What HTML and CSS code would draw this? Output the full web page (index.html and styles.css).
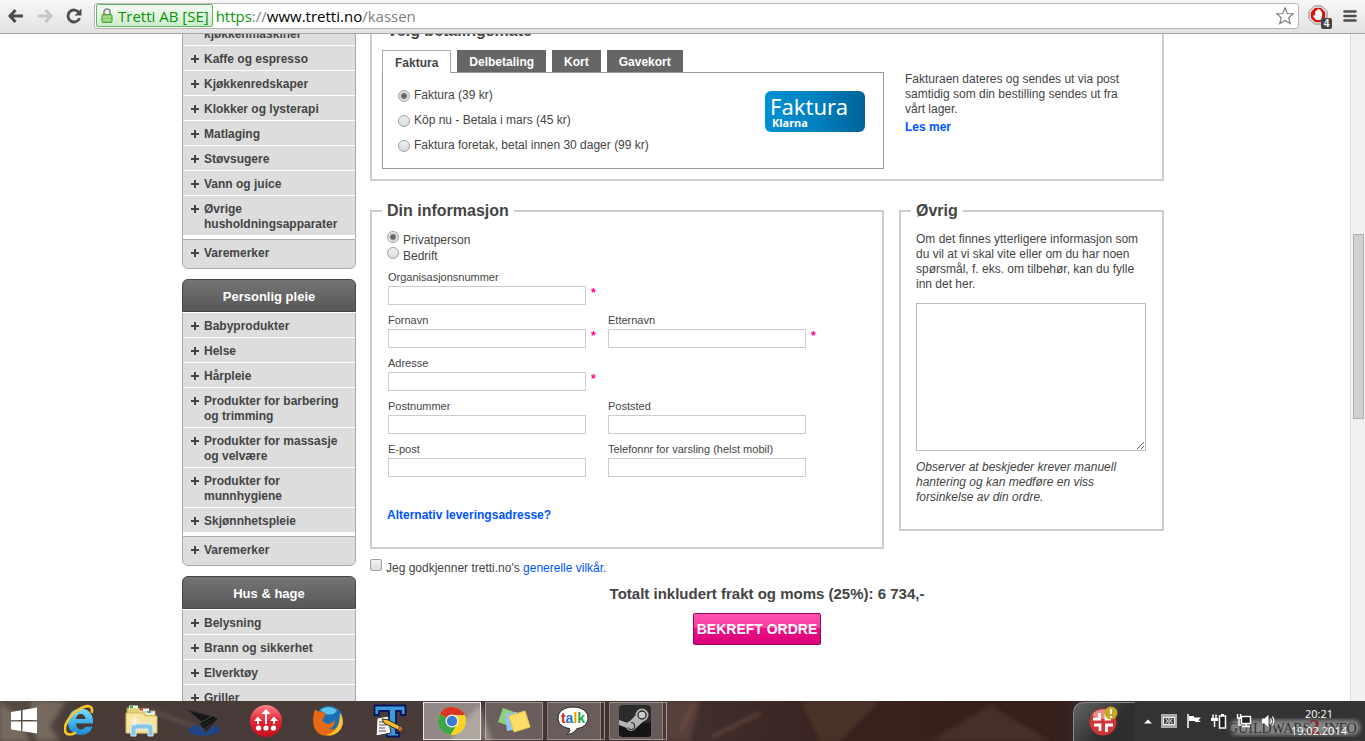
FILE: index.html
```html
<!DOCTYPE html>
<html lang="no">
<head>
    <meta charset="UTF-8">
    <meta name="viewport" content="width=device-width, initial-scale=1.0">
    <title>Tretti.no - Kassen</title>
    <link rel="stylesheet" href="styles.css">
</head>
<body>

    <!-- Browser toolbar -->
    <header class="toolbar">
        <button class="tool-btn" aria-label="Back">
            <svg width="18" height="16" viewBox="0 0 18 16"><path d="M8.500 2 L3 8 L8.500 14 M3 8 H16" fill="none" stroke="#4d4d4d" stroke-width="3"/></svg>
        </button>
        <button class="tool-btn" aria-label="Forward">
            <svg width="18" height="16" viewBox="0 0 18 16"><path d="M9.500 2 L15 8 L9.500 14 M15 8 H2" fill="none" stroke="#c6c6c6" stroke-width="3"/></svg>
        </button>
        <button class="tool-btn" aria-label="Reload">
            <svg width="18" height="16" viewBox="0 0 18 16"><path d="M14 4.6 A6 6 0 1 0 14.6 10.3" fill="none" stroke="#4d4d4d" stroke-width="2.8"/><path d="M16.500 0.500 V7.500 H9.500 Z" fill="#4d4d4d"/></svg>
        </button>
        <div class="omnibox">
            <button class="cert">
                <svg width="12" height="15" viewBox="0 0 12 15"><path d="M3 7 V4 a3 3 0 0 1 6 0 V7" fill="none" stroke="#8a8a8a" stroke-width="1.7"/><rect x="1" y="6.500" width="10" height="8" rx="1" fill="#86d06c" stroke="#4c9a3c"/><path d="M2 9 H10 M2 12 H10" stroke="#b4e8a0"/></svg>
                Tretti AB [SE]
            </button>
            <div class="url" role="textbox" contenteditable="true" spellcheck="false" aria-label="Address"><span class="url-scheme">https</span><span class="url-dim">://</span>www.tretti.no<span class="url-dim">/kassen</span></div>
            <button class="tool-btn" aria-label="Bookmark">
                <svg width="18" height="18" viewBox="0 0 18 18"><path d="M9 1 L11.300 6.500 L17.200 6.900 L12.700 10.700 L14.200 16.500 L9 13.400 L3.800 16.500 L5.300 10.700 L0.800 6.900 L6.700 6.500 Z" fill="#fff" stroke="#7d7d7d" stroke-width="1.200"/></svg>
            </button>
        </div>
        <button class="tool-btn tool-ext" aria-label="AdBlock">
            <svg width="24" height="24" viewBox="0 0 24 24">
                <path d="M6.500 1 H13.500 L19 6.500 V13.500 L13.500 19 H6.500 L1 13.500 V6.500 Z" fill="#fff" stroke="#777"/>
                <path d="M7 2.800 H13 L17.200 7 V13 L13 17.200 H7 L2.800 13 V7 Z" fill="#d8100c"/>
                <path d="M8 15 L5 11 l1.200 -1 L7.200 10.800 V6 h1.300 V4.800 h1.400 V4 h1.400 V4.800 h1.400 V6.500 h1.400 V12 L12.500 15 Z" fill="#fff"/>
                <rect x="13" y="13" width="11" height="11" rx="2" fill="#444"/>
                <text x="18.500" y="22" text-anchor="middle" class="badge-text">4</text>
            </svg>
        </button>
        <button class="tool-btn" aria-label="Menu">
            <svg width="14" height="14" viewBox="0 0 14 14"><path d="M1.500 2.500 H12.500 M1.500 7 H12.500 M1.500 11.500 H12.500" stroke="#4d4d4d" stroke-width="2.600" stroke-linecap="round"/></svg>
        </button>
    </header>

    <div class="viewport">
        <div class="page-area">
            <div class="page">

                <!-- Category menu -->
                <nav class="sidebar">
                    <section class="menu">
                        <ul>
                            <li class="no-mark"><a href="#">kjøkkenmaskiner</a></li>
                            <li><a href="#">Kaffe og espresso</a></li>
                            <li><a href="#">Kjøkkenredskaper</a></li>
                            <li><a href="#">Klokker og lysterapi</a></li>
                            <li><a href="#">Matlaging</a></li>
                            <li><a href="#">Støvsugere</a></li>
                            <li><a href="#">Vann og juice</a></li>
                            <li><a href="#">Øvrige husholdningsapparater</a></li>
                        </ul>
                        <div class="brands"><a href="#">Varemerker</a></div>
                    </section>
                    <section class="menu">
                        <h2>Personlig pleie</h2>
                        <ul>
                            <li><a href="#">Babyprodukter</a></li>
                            <li><a href="#">Helse</a></li>
                            <li><a href="#">Hårpleie</a></li>
                            <li><a href="#">Produkter for barbering og trimming</a></li>
                            <li><a href="#">Produkter for massasje og velvære</a></li>
                            <li><a href="#">Produkter for munnhygiene</a></li>
                            <li><a href="#">Skjønnhetspleie</a></li>
                        </ul>
                        <div class="brands"><a href="#">Varemerker</a></div>
                    </section>
                    <section class="menu">
                        <h2>Hus &amp; hage</h2>
                        <ul>
                            <li><a href="#">Belysning</a></li>
                            <li><a href="#">Brann og sikkerhet</a></li>
                            <li><a href="#">Elverktøy</a></li>
                            <li><a href="#">Griller</a></li>
                        </ul>
                    </section>
                </nav>

                <!-- Checkout form -->
                <form class="checkout">
                    <fieldset class="box payment">
                        <legend>Velg betalingsmåte</legend>
                        <div class="payment-cols">
                            <div class="payment-main">
                                <div class="tabs">
                                    <button type="button" class="tab active">Faktura</button>
                                    <button type="button" class="tab">Delbetaling</button>
                                    <button type="button" class="tab">Kort</button>
                                    <button type="button" class="tab">Gavekort</button>
                                </div>
                                <div class="tab-body">
                                    <div class="options">
                                        <label><input type="radio" name="pay" checked> Faktura (39 kr)</label>
                                        <label><input type="radio" name="pay"> Köp nu - Betala i mars (45 kr)</label>
                                        <label><input type="radio" name="pay"> Faktura foretak, betal innen 30 dager (99 kr)</label>
                                    </div>
                                    <svg class="klarna" width="100" height="41" viewBox="0 0 100 41">
                                        <defs><linearGradient id="klarnaBg"><stop offset="0" stop-color="#0090d4"/><stop offset="0.500" stop-color="#0082c0"/><stop offset="1" stop-color="#00639a"/></linearGradient></defs>
                                        <rect width="100" height="41" rx="6" fill="url(#klarnaBg)"/>
                                        <text x="5" y="24" class="klarna-big">Faktura</text>
                                        <text x="7" y="36" class="klarna-small">Klarna</text>
                                    </svg>
                                </div>
                            </div>
                            <div class="payment-info">
                                <p>Fakturaen dateres og sendes ut via post samtidig som din bestilling sendes ut fra vårt lager.</p>
                                <a class="strong-link" href="#">Les mer</a>
                            </div>
                        </div>
                    </fieldset>

                    <div class="columns">
                        <fieldset class="box info">
                            <legend>Din informasjon</legend>
                            <div class="person-type">
                                <label><input type="radio" name="type" checked> Privatperson</label>
                                <label><input type="radio" name="type"> Bedrift</label>
                            </div>
                            <div class="fields">
                                <div class="field full required">
                                    <label for="orgnr">Organisasjonsnummer</label>
                                    <input type="text" id="orgnr">
                                </div>
                                <div class="field required">
                                    <label for="fornavn">Fornavn</label>
                                    <input type="text" id="fornavn">
                                </div>
                                <div class="field required">
                                    <label for="etternavn">Etternavn</label>
                                    <input type="text" id="etternavn">
                                </div>
                                <div class="field full required">
                                    <label for="adresse">Adresse</label>
                                    <input type="text" id="adresse">
                                </div>
                                <div class="field">
                                    <label for="postnr">Postnummer</label>
                                    <input type="text" id="postnr">
                                </div>
                                <div class="field">
                                    <label for="poststed">Poststed</label>
                                    <input type="text" id="poststed">
                                </div>
                                <div class="field">
                                    <label for="epost">E-post</label>
                                    <input type="text" id="epost">
                                </div>
                                <div class="field">
                                    <label for="telefon">Telefonnr for varsling (helst mobil)</label>
                                    <input type="text" id="telefon">
                                </div>
                            </div>
                            <a class="strong-link alt-address" href="#">Alternativ leveringsadresse?</a>
                        </fieldset>

                        <fieldset class="box other">
                            <legend>Øvrig</legend>
                            <label for="comment">Om det finnes ytterligere informasjon som du vil at vi skal vite eller om du har noen spørsmål, f. eks. om tilbehør, kan du fylle inn det her.</label>
                            <textarea id="comment"></textarea>
                            <p class="note">Observer at beskjeder krever manuell hantering og kan medføre en viss forsinkelse av din ordre.</p>
                        </fieldset>
                    </div>

                    <div class="terms">
                        <input type="checkbox" id="terms">
                        <label for="terms">Jeg godkjenner tretti.no's <a href="#">generelle vilkår</a>.</label>
                    </div>
                    <div class="total">Totalt inkludert frakt og moms (25%): 6 734,-</div>
                    <div class="confirm-row">
                        <button type="button" class="confirm">BEKREFT ORDRE</button>
                    </div>
                </form>
            </div>
        </div>
        <div class="scrollbar"><div class="thumb"></div></div>
    </div>

    <!-- Windows taskbar -->
    <footer class="taskbar">
        <svg class="wallpaper" viewBox="0 0 1365 40" preserveAspectRatio="none" aria-hidden="true">
            <defs>
                <linearGradient id="wall">
                    <stop offset="0" stop-color="#5a4c45"/><stop offset="0.060" stop-color="#483a37"/>
                    <stop offset="0.300" stop-color="#493b39"/><stop offset="0.500" stop-color="#40302d"/>
                    <stop offset="0.620" stop-color="#38221e"/><stop offset="0.780" stop-color="#35201b"/>
                    <stop offset="0.800" stop-color="#333"/><stop offset="1" stop-color="#343434"/>
                </linearGradient>
                <filter id="soft"><feGaussianBlur stdDeviation="2"/></filter>
            </defs>
            <rect width="1365" height="40" fill="url(#wall)"/>
            <g filter="url(#soft)">
                <path d="M0 2 L14 12 L30 40 H0 Z" fill="#766a5e"/>
                <path d="M30 0 H66 L50 26 L60 40 H36 Z" fill="#85796b" opacity=".7"/>
                <path d="M140 5 L205 30" stroke="#85756d" stroke-width="2" opacity=".6"/>
                <path d="M480 4 L492 40 H450 L462 22 Z" fill="#9a9082" opacity=".6"/>
                <path d="M664 0 H700 L690 40 H666 Z" fill="#57413a"/>
                <path d="M694 3 L680 30 M712 36 L760 12" stroke="#765044" stroke-width="2"/>
                <path d="M800 0 H880 L840 40 H820 Z" fill="#4b3028"/>
                <path d="M930 40 L990 4 L1050 40 Z" fill="#472e26"/>
            </g>
        </svg>
        <button class="start" aria-label="Start">
            <svg width="28" height="28" viewBox="0 0 28 28" fill="#fff"><path d="M1 5 L11 3.300 V13 H1 Z M12.500 3 L27 .5 V13 H12.500 Z M1 14.500 H11 V24 L1 22.400 Z M12.500 14.500 H27 V26.500 L12.500 24.300 Z"/></svg>
        </button>
        <button class="task" aria-label="Internet Explorer">
            <svg width="32" height="34" viewBox="0 0 32 34">
                <defs><linearGradient id="ieBlue" x2="0" y2="1"><stop offset="0" stop-color="#7fdcff"/><stop offset="0.500" stop-color="#43b4ee"/><stop offset="1" stop-color="#1c86d2"/></linearGradient></defs>
                <path fill-rule="evenodd" d="M16.500 4.500 C24 4.500 29 10 29 17 V19.500 H12 C12 23 14 25.500 17 25.500 C19 25.500 20.500 24.500 21.500 22.800 H28.500 C27 28 22.500 31 16.500 31 C9 31 4 25.500 4 18 C4 10 9.500 4.500 16.500 4.500 Z M12 15 H21.500 C21.300 12 19.500 10 16.700 10 C14 10 12.200 12 12 15 Z" fill="url(#ieBlue)"/>
                <path d="M27.500 9 C30 1 23 0 14 6 C5 12 -1 22 1.500 28 C3 31.500 8 31 12 28.500" fill="none" stroke="#f8c625" stroke-width="2.600"/>
            </svg>
        </button>
        <button class="task" aria-label="File Explorer">
            <svg width="34" height="32" viewBox="0 0 34 32">
                <path d="M2 6 V3 h12 l2 3 h14 V28 H2 Z" fill="#e4cf77" stroke="#b69a3d"/>
                <path d="M4 2 h9 M15 5 h9 M21 8 h9" stroke="#f7f7f0" stroke-width="3"/>
                <path d="M5 2 h3" stroke="#2bab38" stroke-width="2"/><path d="M15 4.500 h3" stroke="#d93222" stroke-width="2"/><path d="M22 7 h4" stroke="#3197d6" stroke-width="2"/>
                <path d="M1 8 H18 l2 3 H32 V28 H1 Z" fill="#f6e5a0" stroke="#d0b968"/>
                <path d="M6 31 V23 q0 -4 4 -4 H24 q4 0 4 4 V31 h-5 V24 H11 V31 Z" fill="#87c5e4" stroke="#d3eefa"/>
                <path d="M10 11 V21 M5 16 H15 M7 13 L13 19 M13 13 L7 19" stroke="#fff" opacity=".8"/>
            </svg>
        </button>
        <button class="task" aria-label="Laptop">
            <svg width="34" height="32" viewBox="0 0 34 32">
                <ellipse cx="17" cy="25" rx="15.500" ry="5.500" fill="#1c4687"/>
                <path d="M1 5 L24 11 L31 13 L18 20 Z" fill="#171717" stroke="#333"/>
                <path d="M11 19 L27 10 L32 14 L19 28 Z" fill="#2a2a2a" stroke="#4b4b4b"/>
                <path d="M14 19 L27 12 M16 22 L29 14" stroke="#111" stroke-width="2"/>
            </svg>
        </button>
        <button class="task" aria-label="Launcher">
            <svg width="34" height="34" viewBox="0 0 34 34">
                <defs><linearGradient id="redBall" x2="0" y2="1"><stop offset="0" stop-color="#ff7f86"/><stop offset="0.500" stop-color="#e02733"/><stop offset="1" stop-color="#c8101d"/></linearGradient></defs>
                <circle cx="17" cy="17" r="16" fill="url(#redBall)"/>
                <path d="M9 20 V15 M17 20 V8 M25 20 V15" stroke="#fff" stroke-width="2"/>
                <path d="M5 17 L9 12.500 L13 17 Z M12.500 10 L17 5 L21.500 10 Z M21 17 L25 12.500 L29 17 Z" fill="#fff"/>
                <circle cx="9.500" cy="24" r="2.600" fill="#fff"/><circle cx="17" cy="24" r="2.600" fill="#fff"/><circle cx="24.500" cy="24" r="2.600" fill="#fff"/>
            </svg>
        </button>
        <button class="task" aria-label="Firefox">
            <svg width="32" height="32" viewBox="0 0 32 32">
                <circle cx="17" cy="15" r="14" fill="#1c6fb5"/><path d="M8 5 Q16 -1 25 5 Q22 11 14 9 Z" fill="#5cc3ea"/>
                <path d="M3 4 C5 7 8 6 10 7 C13 8 15 10 12 12 C10 14 10 16 13 18 C17 20 21 18 22 15 C24 19 21 23 17 24 C25 26 29 19 28 9 C32 14 32 22 26 27 C19 33 7 32 3 24 C0 18 1 10 3 4 Z" fill="#e66a14"/>
                <path d="M28 8 C32 14 32 22 26 27 C22 30 18 31 14 30 C24 28 28 20 28 8 Z" fill="#fbc530"/>
            </svg>
        </button>
        <button class="task" aria-label="Text editor">
            <svg width="34" height="34" viewBox="0 0 34 34">
                <path d="M1.500 1.500 H32.500 V11 H28 V7 H23 V29 H26 V32.500 H14 V29 H16 V7 H6 V11 H1.500 Z" fill="#3d9ad8" stroke="#0a145c" stroke-width="1.800"/>
                <path d="M4 14 L15 12 L18 29 L3 32 Z" fill="#f4f4f4" stroke="#333"/>
                <path d="M6 18 H13 M6 21 H14 M6 24 H12 M6 27 H13" stroke="#555"/>
                <path d="M9 15 L14 15.500 L27 22 L25 26 L11 19 Z" fill="#f6bb35" stroke="#3d2a0a"/><path d="M25 26 L27 22 L29 24 L28 27 Z" fill="#e06a3c"/>
            </svg>
        </button>
        <button class="task open current" aria-label="Chrome">
            <svg width="30" height="30" viewBox="0 0 30 30">
                <circle cx="15" cy="15" r="14" fill="#fbd227"/>
                <path d="M15 15 L2.900 8 A14 14 0 0 1 27.800 9 L15 9 Z" fill="#dc3527"/>
                <path d="M15 15 L2.900 8 A14 14 0 0 0 13.500 29 L20 18 Z" fill="#3da648"/>
                <circle cx="15" cy="15" r="6.500" fill="#f2f2f2"/><circle cx="15" cy="15" r="5.200" fill="#3b7ed0"/>
            </svg>
        </button>
        <button class="task open" aria-label="Sticky Notes">
            <svg width="34" height="28" viewBox="0 0 34 28">
                <path d="M6 1 L20 6 L15 20 L1 15 Z" fill="#8fd07c"/><path d="M8 7 L20 5 L23 22 L10 24 Z" fill="#90c5ee"/><path d="M12 9 L28 4 L33 20 L17 25 Z" fill="#fbdc67" stroke="#f0ca48"/>
            </svg>
        </button>
        <button class="task open stacked" aria-label="Google Talk">
            <svg width="32" height="30" viewBox="0 0 32 30">
                <path d="M16 1 C25 1 31 5.500 31 12 C31 18 26 22 20 22.500 C18 26 15 28 10 28.500 C12 27 13 25 12.500 22.500 C5 21.500 1 17.500 1 12 C1 5.500 7 1 16 1 Z" fill="#fff" stroke="#222"/>
                <text x="16" y="16.500" text-anchor="middle" class="talk-text"><tspan fill="#d22">t</tspan><tspan fill="#27c">a</tspan><tspan fill="#e90">l</tspan><tspan fill="#2a3">k</tspan></text>
            </svg>
        </button>
        <button class="task open stacked" aria-label="Steam">
            <svg width="32" height="32" viewBox="0 0 32 32">
                <rect width="32" height="32" rx="4" fill="#2b2b2b"/><path d="M0 18 H32 V28 q0 4 -4 4 H4 q-4 0 -4 -4 Z" fill="#151515"/>
                <path d="M0 15 L9 18 L17 10 L27 14 L17 23 Q12 28 8 23 L0 20 Z" fill="#b5b5b5"/>
                <circle cx="23" cy="10" r="6.500" fill="#b5b5b5"/><circle cx="23" cy="10" r="4" fill="#ccc" stroke="#333" stroke-width="1.400"/>
                <circle cx="12" cy="21" r="5" fill="#b5b5b5"/><path d="M9 22.500 A3.500 3.500 0 1 0 12 17.500" fill="none" stroke="#333" stroke-width="1.200"/>
            </svg>
        </button>

        <div class="tray">
            <button class="tray-tile" aria-label="Avira">
                <svg width="30" height="32" viewBox="0 0 30 32">
                    <circle cx="14" cy="17" r="13.500" fill="#cf3537"/><path d="M3 10 A13.500 13.500 0 0 1 25 10 Q14 18 3 10" fill="#ee8b88"/>
                    <path d="M4 14 H10.500 V8 M17 9 V14 H22 M24 20 H17.500 V27 M11 26 V20 H5" fill="none" stroke="#fff" stroke-width="2.800"/>
                    <circle cx="22" cy="8" r="6.500" fill="#c8a727"/><path d="M22 4 V9 M22 11 V13" stroke="#fff" stroke-width="2"/>
                </svg>
            </button>
            <svg class="icon" width="8" height="5" viewBox="0 0 8 5"><path d="M0 4.500 L4 .5 L8 4.500 Z" fill="#fff"/></svg>
            <svg class="icon" width="16" height="14" viewBox="0 0 16 14"><rect width="16" height="14" fill="#a9adb2"/><rect x="2.500" y="3.500" width="11" height="7" fill="#444" stroke="#eee"/><path d="M8 4 V10 M5 4.500 L6.500 7 L5 9.500 M11 4.500 L9.500 7 L11 9.500" fill="none" stroke="#eee"/></svg>
            <svg class="icon" width="16" height="16" viewBox="0 0 16 16"><path d="M2 1 V15" stroke="#fff" stroke-width="1.500"/><path d="M3 3 H8 V4.500 H15 L12.500 7 L15 9 H9 V8 H3 Z" fill="#fff"/></svg>
            <svg class="icon" width="16" height="16" viewBox="0 0 16 16"><path d="M3.500 8 V14 M2 1.500 V5 M5 1.500 V5" stroke="#fff" stroke-width="1.500"/><path d="M0 5 H7 V8 H0 Z" fill="#fff"/><rect x="8.500" y="3" width="6" height="12" fill="#222" stroke="#fff" stroke-width="1.500"/><rect x="10" y="1" width="3" height="2" fill="#fff"/></svg>
            <svg class="icon" width="16" height="16" viewBox="0 0 16 16"><rect x="5.500" y="3.500" width="9" height="7" fill="#222" stroke="#fff" stroke-width="1.400"/><path d="M10 10 V13.500 M6 13.500 H14 M1.500 1 V5 H4.500 V1 M3 5 V12 H5" fill="none" stroke="#fff" stroke-width="1.400"/></svg>
            <svg class="icon" width="16" height="16" viewBox="0 0 16 16"><path d="M1 5.500 H3.500 L7.500 2 V14 L3.500 10.500 H1 Z" fill="#fff"/><path d="M9.500 5.500 Q11 8 9.500 10.500 M11.500 3.500 Q14 8 11.500 12.500" fill="none" stroke="#fff" stroke-width="1.200"/></svg>
            <div class="clock"><time>20:21</time><time>19.02.2014</time></div>
            <svg class="watermark" width="138" height="26" viewBox="0 0 138 26">
                <defs><filter id="glow"><feGaussianBlur stdDeviation="2"/></filter></defs>
                <rect x="4" y="6" width="130" height="15" rx="7" fill="#aaa" opacity=".7" filter="url(#glow)"/>
                <text x="2" y="19" class="watermark-text">GUILDWARS</text><text x="83" y="20" class="watermark-two">2</text><text x="98" y="19" class="watermark-text">INFO</text>
            </svg>
        </div>
    </footer>

</body>
</html>
```
FILE: styles.css
```css
* {
    box-sizing: border-box;
}

body {
    margin: 0;
    height: 100vh;
    display: flex;
    flex-direction: column;
    overflow: hidden;
    background-color: #fff;
    color: #444;
    font-family: "Liberation Sans", Arial, sans-serif;
    font-size: 12px;
    line-height: 15px;
}

button,
input,
textarea {
    font-family: inherit;
}

p {
    margin: 0;
}

a {
    color: #05f;
    text-decoration: none;
}

/* Browser toolbar */
.toolbar {
    display: flex;
    align-items: center;
    gap: 11px;
    height: 34px;
    padding: 0 8px 2px 7px;
    flex-shrink: 0;
    background: linear-gradient(#f7f7f7, #e2e2e2);
    border-bottom: 1px solid #a6a6a6;
}

.tool-btn {
    display: flex;
    padding: 0;
    border: none;
    background: none;
}

.tool-ext {
    margin: 3px 0 0 -2px;
}

.omnibox {
    flex: 1;
    display: flex;
    align-items: center;
    height: 26px;
    padding: 0 4px 0 1px;
    background-color: #fff;
    border: 1px solid #b5b5b5;
    border-radius: 3px;
    font-family: "Open Sans", sans-serif;
    font-size: 15px;
}

.cert {
    display: flex;
    align-items: center;
    gap: 5px;
    height: 23px;
    padding: 0 3px 0 4px;
    background: linear-gradient(#f5fbf5, #cdebcd);
    border: 1px solid #5fb75f;
    border-radius: 2px;
    color: #0a930a;
    font-size: 15px;
    white-space: nowrap;
}

.url {
    flex: 1;
    padding-left: 3px;
    color: #000;
    line-height: 20px;
    outline: none;
}

.url-scheme {
    color: #0a930a;
}

.url-dim {
    color: #808080;
}

.badge-text {
    fill: #fff;
    font: bold 10px "Liberation Sans", sans-serif;
}

/* Page area with scrollbar */
.viewport {
    flex: 1;
    min-height: 0;
    display: flex;
}

.page-area {
    flex: 1;
    overflow: hidden;
}

.scrollbar {
    width: 15px;
    padding: 200px 1px 0 2px;
    background-color: #f1f1f1;
    border-left: 1px solid #dcdcdc;
}

.thumb {
    height: 185px;
    background-color: #d0d0d0;
    border: 1px solid #b0b0b0;
}

/* The page is scrolled a little into the content */
.page {
    display: flex;
    align-items: flex-start;
    gap: 14px;
    max-width: 986px;
    margin: -13px auto 0;
    padding-right: 4px;
}

/* Category menu */
.sidebar {
    width: 174px;
    flex-shrink: 0;
    font-weight: bold;
}

.menu {
    margin-bottom: 10px;
}

.menu h2 {
    margin: 0 0 1px;
    height: 33px;
    background: linear-gradient(#757575, #575757);
    border: 1px solid #444;
    border-radius: 6px 6px 0 0;
    color: #fff;
    font-size: 13px;
    line-height: 34px;
    text-align: center;
}

.menu ul {
    margin: 0;
    padding: 0 0 3px;
    list-style: none;
    border: 1px solid #aaa;
    border-width: 0 1px;
}

.menu li {
    padding: 6px 14px 3px 21px;
    background-color: #ddd;
    border-bottom: 1px solid #fff;
}

.menu a {
    display: block;
    color: #444;
}

.menu li a::before,
.brands a::before {
    content: "";
    float: left;
    width: 8px;
    height: 8px;
    margin: 3px 0 0 -13px;
    background: linear-gradient(#444, #444) center / 8px 2px no-repeat, linear-gradient(#444, #444) center / 2px 8px no-repeat;
}

.menu .no-mark a::before {
    content: none;
}

.brands {
    padding: 6px 14px 7px 21px;
    background-color: #ddd;
    border: 1px solid #aaa;
    border-radius: 0 0 6px 6px;
}

/* Checkout form */
.checkout {
    flex: 1;
    min-width: 0;
}

.box {
    margin: 0;
    padding: 0 10px 10px;
    min-width: 0;
    border: 2px solid #ccc;
}

.box legend {
    padding: 0 5px;
    font-size: 16px;
    font-weight: bold;
    line-height: 20px;
}

input[type="radio"],
input[type="checkbox"] {
    appearance: none;
    flex-shrink: 0;
    width: 12px;
    height: 12px;
    margin: 0;
    background: linear-gradient(#f0f0f0, #dcdcdc);
    border: 1px solid #a0a0a0;
}

input[type="radio"] {
    border-radius: 50%;
}

input[type="radio"]:checked {
    background: radial-gradient(circle, #666 2px, #e8e8e8 4px);
}

input[type="checkbox"] {
    border-radius: 2px;
}

.payment-cols {
    display: flex;
    gap: 21px;
    padding-top: 9px;
}

.payment-main {
    width: 502px;
}

.tabs {
    display: flex;
    gap: 6px;
}

.tab {
    height: 22px;
    padding: 1px 12px 0;
    background-color: #666;
    border: none;
    color: #fff;
    font-size: 12px;
    font-weight: bold;
}

.tab.active {
    height: 23px;
    margin-bottom: -1px;
    position: relative;
    background-color: #fff;
    border: 1px solid #aaa;
    border-bottom: none;
    color: #444;
}

.tab-body {
    display: flex;
    justify-content: space-between;
    padding: 10px 18px 10px 15px;
    border: 1px solid #999;
}

.options label {
    display: flex;
    align-items: center;
    gap: 4px;
    height: 25px;
}

.klarna {
    margin-top: 8px;
}

.klarna-big {
    fill: #fff;
    font: 22px "Noto Sans", sans-serif;
}

.klarna-small {
    fill: #fff;
    font: bold 11px "Noto Sans", sans-serif;
}

.payment-info {
    flex: 1;
    padding: 22px 20px 0 0;
}

.strong-link {
    display: inline-block;
    margin-top: 3px;
    font-weight: bold;
}

.columns {
    display: flex;
    align-items: flex-start;
    gap: 15px;
    margin-top: 20px;
}

.info {
    width: 514px;
    padding: 0 10px 24px 15px;
}

.info legend {
    margin-left: -5px;
}

.person-type {
    padding-top: 10px;
}

.person-type label {
    display: flex;
    gap: 4px;
    height: 16px;
    line-height: 18px;
}

.fields {
    display: grid;
    grid-template-columns: 220px 220px;
    row-gap: 10px;
    padding: 8px 0 0 1px;
}

.field {
    position: relative;
}

.field.full {
    grid-column: 1 / 3;
}

.field label {
    display: block;
    margin-bottom: 3px;
    font-size: 11px;
    line-height: 12px;
}

.field input {
    display: block;
    width: 198px;
    height: 18px;
    padding: 0 3px;
    border: 1px solid #ccc;
}

.field input {
    height: 19px;
    margin-bottom: -1px;
}

.required::after {
    content: "*";
    position: absolute;
    top: 15px;
    left: 203px;
    color: #f08;
    font-size: 12px;
    font-weight: bold;
}

.alt-address {
    margin-top: 32px;
}

.other {
    flex: 1;
    padding: 0 10px 25px 15px;
}

.other legend {
    margin-left: -5px;
}

.other label {
    display: block;
    padding-top: 11px;
}

.other textarea {
    display: block;
    width: 230px;
    height: 148px;
    margin: 11px 0 9px;
    border: 1px solid #bbb;
}

.note {
    margin-bottom: -1px;
    font-style: italic;
}

.terms {
    display: flex;
    gap: 4px;
    margin-top: 10px;
    line-height: 18px;
}

.total {
    margin-top: 7px;
    font-size: 15px;
    font-weight: bold;
    line-height: 20px;
    text-align: center;
}

.confirm-row {
    display: flex;
    justify-content: center;
    padding: 9px 20px 0 0;
}

.confirm {
    height: 32px;
    padding: 0 3px;
    background: linear-gradient(#ff4fb0, #fa3ba2 45%, #ec1088 46%, #dc0078);
    border: 1px solid #8d0a50;
    border-radius: 2px;
    color: #fff;
    font-size: 14px;
    font-weight: bold;
}

/* Windows taskbar */
.taskbar {
    display: flex;
    gap: 4px;
    height: 40px;
    flex-shrink: 0;
    position: relative;
    z-index: 0;
}

.wallpaper {
    position: absolute;
    top: 0;
    left: 0;
    width: 100%;
    height: 100%;
    z-index: -1;
}

.start,
.task {
    display: flex;
    align-items: center;
    justify-content: center;
    width: 58px;
    padding: 0;
    border: none;
    background: none;
}

.start {
    width: 47px;
}

.task.open {
    height: 38px;
    margin-top: 1px;
    background-color: rgba(255, 255, 255, 0.2);
    border: 1px solid rgba(255, 255, 255, 0.35);
}

.task.current {
    background-color: rgba(255, 255, 255, 0.4);
    border-color: #e6e6e6;
}

.task.stacked {
    padding-right: 6px;
    background: linear-gradient(to left, transparent 3px, rgba(255, 255, 255, 0.4) 3px, rgba(255, 255, 255, 0.4) 4px, rgba(255, 255, 255, 0.2) 4px);
}

.talk-text {
    font: bold 14px "Liberation Sans", sans-serif;
}

.tray {
    display: flex;
    align-items: center;
    gap: 8px;
    margin-left: auto;
    padding-right: 18px;
    position: relative;
}

.tray-tile {
    width: 62px;
    height: 39px;
    margin-top: 1px;
    padding: 0;
    background: linear-gradient(135deg, #666, #2e2e2e 60%);
    border: 1px solid #888;
    border-width: 1px 0 0 1px;
    border-radius: 10px 0 0 0;
}

.tray .icon {
    margin-left: 1px;
}

.clock {
    display: flex;
    flex-direction: column;
    align-items: center;
    margin-left: 6px;
    padding-top: 2px;
    color: #fff;
    font-family: "Open Sans", sans-serif;
    font-size: 11px;
    line-height: 17px;
}

.watermark {
    position: absolute;
    right: 1px;
    bottom: 1px;
    z-index: -1;
}

.watermark-text {
    fill: #333;
    font: 14px "Liberation Serif", serif;
}

.watermark-two {
    fill: #8d2a2a;
    font: bold 22px "Liberation Serif", serif;
}
```
